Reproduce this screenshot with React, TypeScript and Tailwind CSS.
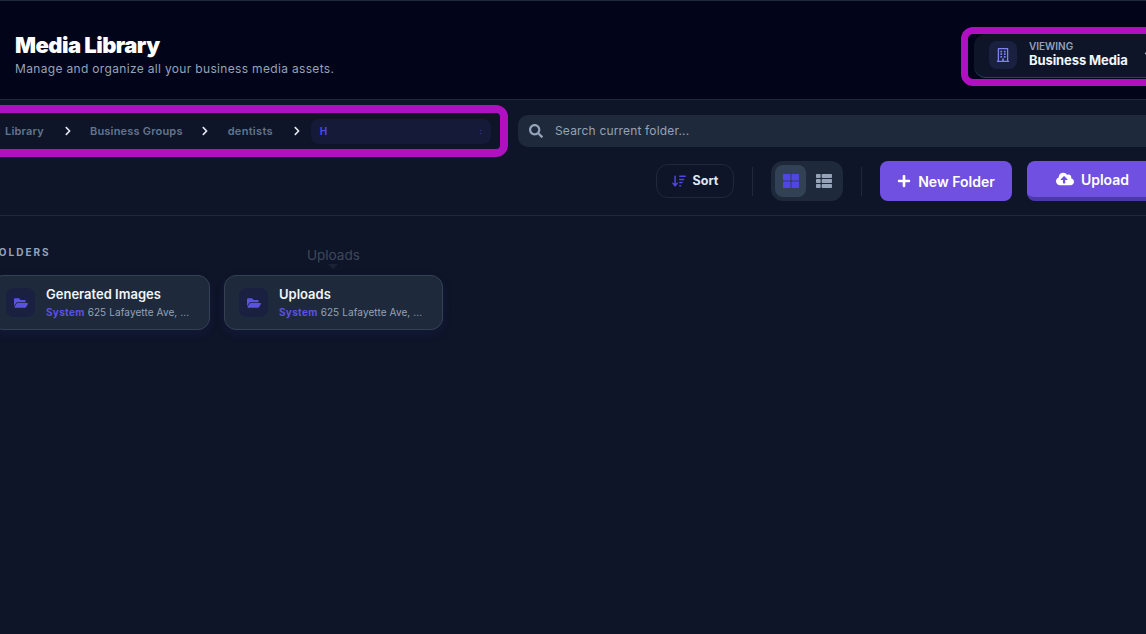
import {
  FaChevronDown,
  FaChevronRight,
  FaCloudUploadAlt,
  FaFolderOpen,
  FaPlus,
  FaRegBuilding,
  FaSearch,
  FaThLarge,
  FaThList,
} from "react-icons/fa";
import { FaArrowDownWideShort } from "react-icons/fa6";

const crumbs = ["Library", "Business Groups", "dentists"];

function Crumbs() {
  return (
    <div className="flex h-[52px] w-[528px] shrink-0 items-center rounded-[12px] border-[8px] border-[#b010c0] pl-[17px] -ml-[20px]">
      <span className="mr-[19px] text-[11px] font-semibold tracking-[0.2px] text-[#64748b]">
        {crumbs[0]}
      </span>
      <FaChevronRight className="mr-[17px] text-[10px] text-[#e2e8f0]" />
      <span className="mr-[17px] text-[11px] font-semibold tracking-[0.2px] text-[#64748b]">
        {crumbs[1]}
      </span>
      <FaChevronRight className="mr-[18px] text-[10px] text-[#e2e8f0]" />
      <span className="mr-[19px] text-[11px] font-semibold tracking-[0.3px] text-[#64748b]">
        {crumbs[2]}
      </span>
      <FaChevronRight className="mr-[9px] text-[10px] text-[#e2e8f0]" />
      <div className="flex h-[25px] w-[180px] items-center justify-between rounded-[8px] bg-[#141a38] px-[9px]">
        <span className="text-[10px] font-bold text-[#4f46e5]">H</span>
        <span className="text-[8px] font-bold text-[#3f3bb5]">:</span>
      </div>
    </div>
  );
}

function FolderCard({ name }: { name: string }) {
  return (
    <div className="flex h-[55px] w-[219px] shrink-0 items-center gap-[11px] rounded-[12px] border border-[#334155] bg-[#1e293b] pl-[14px] shadow-[0_4px_12px_rgba(79,70,229,0.08)]">
      <div className="flex h-[29px] w-[29px] shrink-0 items-center justify-center rounded-[8px] bg-[#1a2040]">
        <FaFolderOpen className="text-[14px] text-[#5b52e0]" />
      </div>
      <div className="min-w-0">
        <div className="text-[13px] leading-[16px] font-semibold text-[#f1f5f9]">
          {name}
        </div>
        <div className="mt-[3px] flex gap-[3px] text-[10px] leading-[14px]">
          <span className="font-bold tracking-[0.3px] text-[#5b52e0]">
            System
          </span>
          <span className="tracking-[0.1px] text-[#94a3b8]">
            625 Lafayette Ave, ...
          </span>
        </div>
      </div>
    </div>
  );
}

export default function App() {
  return (
    <div className="h-[634px] w-[1146px] overflow-hidden bg-[#0e1528] font-['Inter',sans-serif]">
      <header className="flex h-[100px] items-center border-t border-b border-[#1e293b] bg-[#02041a] pl-[15px]">
        <div className="mt-[8px] min-w-0 flex-1">
          <h1 className="text-[22px] leading-[28px] font-black tracking-[-0.55px] text-white">
            Media Library
          </h1>
          <p className="mt-[2px] text-[12px] leading-[16px] tracking-[0.33px] text-[#94a3b8]">
            Manage and organize all your business media assets.
          </p>
        </div>
        <div className="mt-[12px] -mr-[20px] h-[59px] w-[205px] shrink-0 rounded-[12px] border-[7px] border-[#b010c0]">
          <div className="ml-[6px] flex h-[44px] items-center gap-[12px] rounded-[12px] border-b border-[#334155] bg-[#0e1528] pl-[15px]">
            <div className="flex h-[28px] w-[28px] shrink-0 items-center justify-center rounded-[8px] bg-[#1a2040]">
              <FaRegBuilding className="text-[14px] text-[#7c83f0]" />
            </div>
            <div className="pb-[2px]">
              <div className="text-[10px] leading-[12px] font-semibold text-[#94a3b8]">
                VIEWING
              </div>
              <div className="text-[13px] leading-[16px] font-bold tracking-[-0.1px] text-[#f1f5f9]">
                Business Media
              </div>
            </div>
            <FaChevronDown className="ml-[4px] shrink-0 text-[10px] text-[#94a3b8]" />
          </div>
        </div>
      </header>

      <div className="h-[116px] border-b border-[#1e293b]">
        <div className="flex h-[57px] items-center pt-[5px]">
          <Crumbs />
          <div className="ml-[10px] flex h-[32px] w-[700px] shrink-0 items-center gap-[12px] rounded-[10px] bg-[#1e293b] pl-[11px]">
            <FaSearch className="text-[14px] text-[#94a3b8]" />
            <span className="text-[12px] tracking-[0.17px] text-[#94a3b8]">
              Search current folder...
            </span>
          </div>
        </div>
        <div className="mt-[4px] flex items-center pl-[656px]">
          <button className="flex h-[34px] w-[78px] shrink-0 items-center justify-center gap-[7px] rounded-[12px] border border-[#1e293b] text-[12.5px] font-bold text-[#e2e8f0]">
            <FaArrowDownWideShort className="text-[14px] text-[#4f46e5]" />
            Sort
          </button>
          <div className="mx-[18px] h-[29px] w-px shrink-0 bg-[#1e293b]" />
          <div className="flex h-[40px] w-[72px] shrink-0 items-center gap-[2px] rounded-[12px] bg-[#1e293b] px-[4px]">
            <div className="flex h-[32px] w-[32px] items-center justify-center rounded-[8px] bg-[#334155]">
              <FaThLarge className="text-[16px] text-[#4f46e5]" />
            </div>
            <div className="flex h-[32px] w-[32px] items-center justify-center">
              <FaThList className="text-[16px] text-[#94a3b8]" />
            </div>
          </div>
          <div className="mx-[18px] h-[29px] w-px shrink-0 bg-[#1e293b]" />
          <button className="flex h-[40px] w-[132px] shrink-0 items-center justify-center gap-[7px] rounded-[8px] bg-[#7050e0] text-[14px] font-semibold text-white">
            <FaPlus className="text-[14px]" />
            New Folder
          </button>
          <button className="ml-[15px] flex h-[40px] w-[131px] shrink-0 items-center justify-center gap-[7px] rounded-[8px] border-b-[4px] border-[#4c39a8] bg-[#7050e0] text-[14px] font-semibold text-white">
            <FaCloudUploadAlt className="text-[18px]" />
            Upload
          </button>
        </div>
      </div>

      <div className="relative -ml-[9px] pt-[30px]">
        <div className="text-[10px] leading-[12px] font-bold tracking-[2px] text-[#94a3b8]">
          FOLDERS
        </div>
        <div className="mt-[17px] flex gap-[14px]">
          <FolderCard name="Generated Images" />
          <FolderCard name="Uploads" />
        </div>
        <div className="absolute top-[29px] left-[316px] flex flex-col items-center text-[13.5px] leading-[20px] text-[#3f4859]">
          Uploads
          <div className="-mt-[1px] h-0 w-0 border-x-[5px] border-t-[5px] border-x-transparent border-t-[#1a2236]" />
        </div>
      </div>
    </div>
  );
}
